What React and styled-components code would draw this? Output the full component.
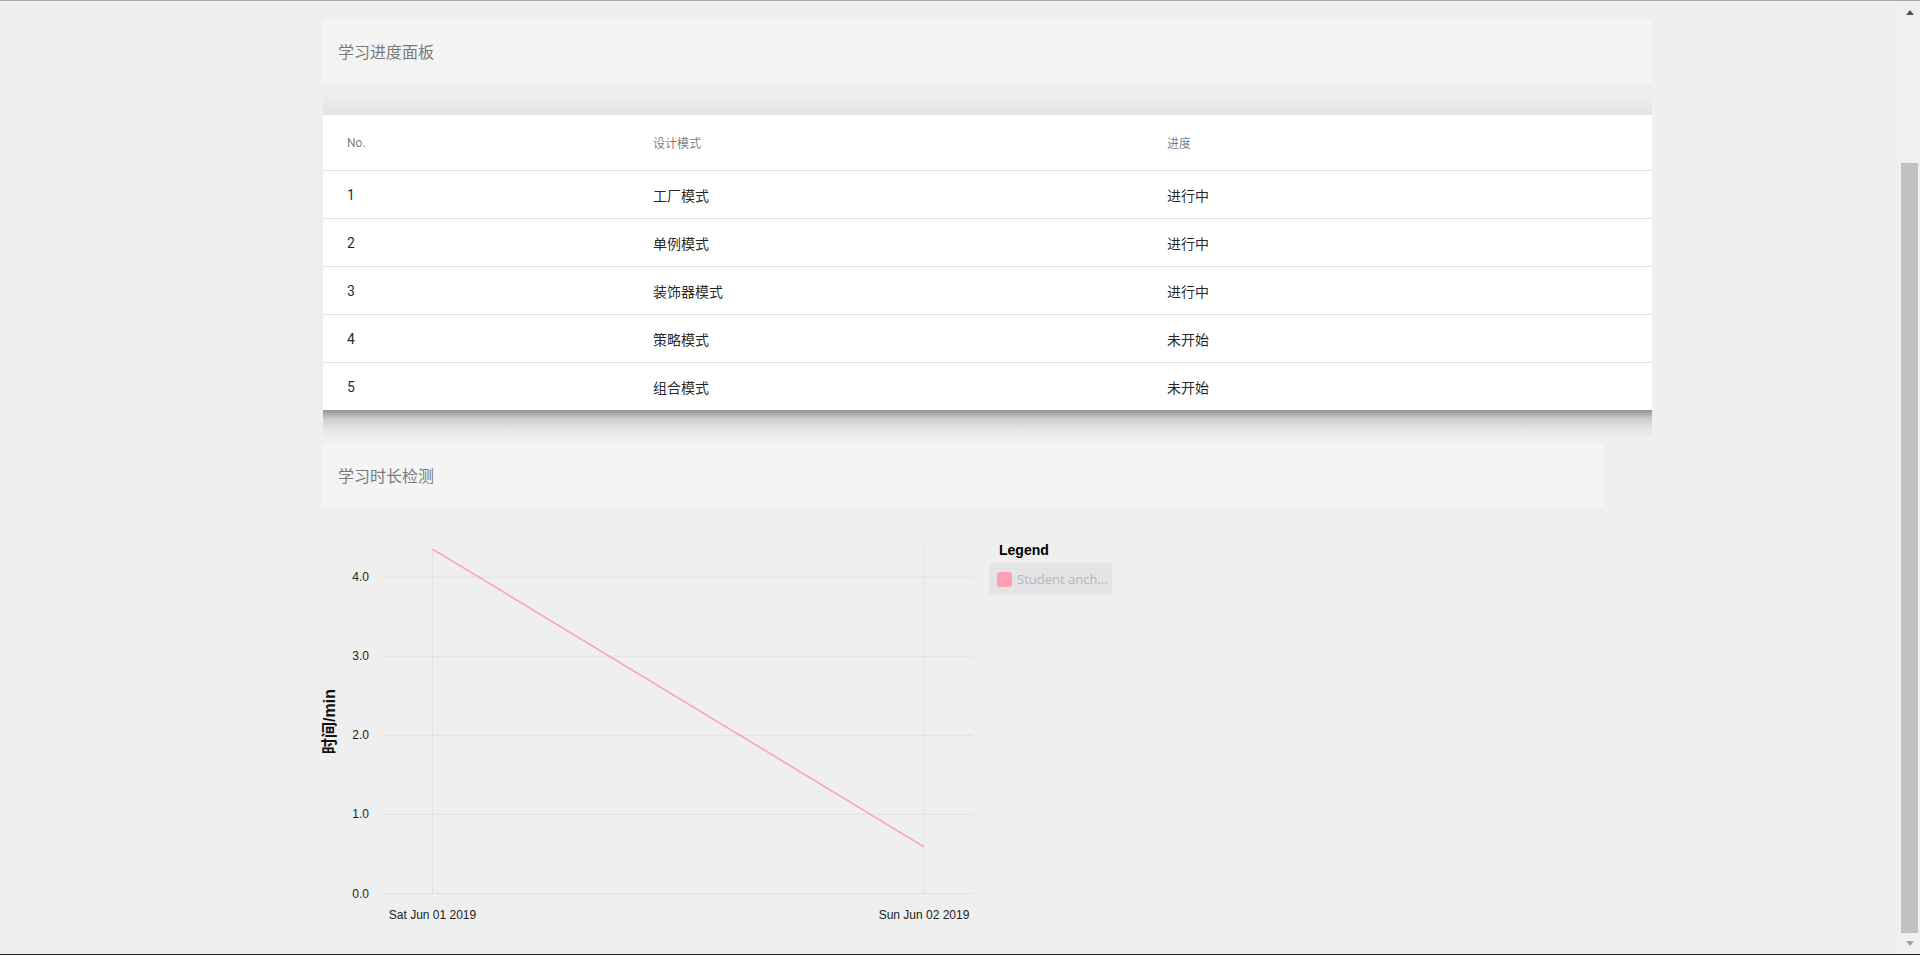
import React from "react";
import styled, { createGlobalStyle } from "styled-components";

const GlobalStyle = createGlobalStyle`
  html, body { margin: 0; padding: 0; height: 100%; overflow: hidden; }
  body {
    font-family: Roboto, "Noto Sans CJK SC", "Liberation Sans", sans-serif;
    background: #efefef;
  }
  * { box-sizing: border-box; }
`;

const Page = styled.div`
  display: flex;
  height: 955px;
  background: #efefef;
  border-top: 1px solid #a9a9a9;
  border-bottom: 1px solid #1e1e1e;
  overflow: hidden;
`;

const Main = styled.main`
  flex: 1;
  padding: 18px 0 0 323px;
`;

const Column = styled.div`
  width: 1329px;
  display: flex;
  flex-direction: column;
`;

const Panel = styled.div`
  height: 64px;
  width: ${(p) => p.$width || "100%"};
  margin-top: ${(p) => p.$top || 0}px;
  background: #f4f4f4;
  display: flex;
  align-items: center;
  padding-left: 15px;
  font-family: "Noto Sans CJK SC", sans-serif;
  font-size: 16px;
  color: #7a7a7a;
`;

const Table = styled.div`
  position: relative;
  margin-top: 32px;
  background: #fff;
  &::before {
    content: "";
    position: absolute;
    left: 0;
    right: 0;
    bottom: 100%;
    height: 22px;
    background: linear-gradient(rgba(0, 0, 0, 0), rgba(0, 0, 0, 0.055));
    pointer-events: none;
  }
  &::after {
    content: "";
    position: absolute;
    left: 0;
    right: 0;
    top: 100%;
    height: 30px;
    background: linear-gradient(
      rgba(0, 0, 0, 0.38),
      rgba(0, 0, 0, 0.14) 30%,
      rgba(0, 0, 0, 0.04) 65%,
      rgba(0, 0, 0, 0)
    );
    pointer-events: none;
  }
`;

const Row = styled.div`
  display: grid;
  grid-template-columns: 306px 514px 1fr;
  align-items: center;
  padding-left: 24px;
  height: ${(p) => (p.$head ? 56 : 48)}px;
  border-bottom: 1px solid #e0e0e0;
  font-size: ${(p) => (p.$head ? 12 : 14)}px;
  color: ${(p) => (p.$head ? "rgba(0,0,0,0.54)" : "rgba(0,0,0,0.87)")};
  &:last-child { border-bottom: none; height: 47px; }
`;

const Cell = styled.div`
  white-space: nowrap;
`;

const ChartRow = styled.div`
  display: flex;
  align-items: flex-start;
  margin-top: 23px;
`;

const ChartSvg = styled.svg`
  display: block;
  overflow: visible;
  flex: none;
`;

const Legend = styled.div`
  margin-left: 6px;
  margin-top: 10px;
  display: flex;
  flex-direction: column;
`;

const LegendTitle = styled.div`
  padding-left: 10px;
  height: 20px;
  line-height: 20px;
  font-family: "Liberation Sans", sans-serif;
  font-weight: bold;
  font-size: 14px;
  color: #000;
`;

const LegendItem = styled.div`
  margin-top: 3px;
  width: 123px;
  height: 32px;
  padding: 0 8px;
  display: flex;
  align-items: center;
  gap: 5px;
  background: #e4e4e4;
  border-radius: 3px;
  font-family: "Open Sans", "Liberation Sans", sans-serif;
  font-size: 13px;
  color: #b3b5c4;
  white-space: nowrap;
`;

const Swatch = styled.span`
  width: 15px;
  height: 15px;
  border-radius: 3px;
  background: #ff9fb3;
  flex: none;
`;

const Scrollbar = styled.div`
  width: 20px;
  display: flex;
  flex-direction: column;
  padding-left: 1px;
  background: #f0f0f0;
`;

const ArrowBox = styled.div`
  width: 17px;
  height: 20px;
  display: flex;
  justify-content: center;
  align-items: ${(p) => (p.$down ? "flex-start" : "center")};
  padding-top: ${(p) => (p.$down ? 7 : 3)}px;
`;

const Triangle = styled.div`
  width: 0;
  height: 0;
  border-left: 4.5px solid transparent;
  border-right: 4.5px solid transparent;
  ${(p) =>
    p.$down
      ? "border-top: 5px solid #a3a3a3;"
      : "border-bottom: 5px solid #505050;"}
`;

const Track = styled.div`
  flex: 1;
`;

const Thumb = styled.div`
  width: 17px;
  height: 770px;
  margin-top: 142px;
  background: #c1c1c1;
`;

const rows = [
  ["1", "工厂模式", "进行中"],
  ["2", "单例模式", "进行中"],
  ["3", "装饰器模式", "进行中"],
  ["4", "策略模式", "未开始"],
  ["5", "组合模式", "未开始"],
];

const Y0 = 363.5;
const STEP = 79.1;
const X1 = 109.5;
const X2 = 601;
const yOf = (v) => Y0 - v * STEP;

function Chart() {
  const ticks = [0, 1, 2, 3, 4];
  const labelStyle = { fontFamily: "'Liberation Sans', sans-serif", fontSize: 12 };
  return (
    <ChartSvg width="660" height="400" viewBox="0 0 660 400">
      {ticks.map((t) => (
        <g key={t}>
          <line x1="61" x2="650" y1={yOf(t)} y2={yOf(t)} stroke="#e1e1e1" strokeWidth="1" />
          <text x="46" y={yOf(t)} textAnchor="end" dominantBaseline="central" fill="#222" style={labelStyle}>
            {t.toFixed(1)}
          </text>
        </g>
      ))}
      <line x1={X1} x2={X1} y1="19" y2={Y0} stroke="#e1e1e1" strokeWidth="1" />
      <line x1={X2} x2={X2} y1="19" y2={Y0} stroke="#e1e1e1" strokeWidth="1" />
      <line x1={X1} y1={yOf(4.355)} x2={X2} y2={yOf(0.59)} stroke="#ff9fb3" strokeWidth="1.5" />
      <text x={X1} y="385" textAnchor="middle" dominantBaseline="central" fill="#222" style={labelStyle}>
        Sat Jun 01 2019
      </text>
      <text x={X2} y="385" textAnchor="middle" dominantBaseline="central" fill="#222" style={labelStyle}>
        Sun Jun 02 2019
      </text>
      <text
        x="0"
        y="0"
        transform="translate(6 191.5) rotate(-90)"
        textAnchor="middle"
        dominantBaseline="central"
        fill="#111"
        style={{ fontFamily: "'Liberation Sans', 'Noto Sans CJK SC', sans-serif", fontSize: 16, fontWeight: "bold" }}
      >
        时间/min
      </text>
    </ChartSvg>
  );
}

export default function App() {
  return (
    <>
      <GlobalStyle />
      <Page>
        <Main>
          <Column>
            <Panel>学习进度面板</Panel>
            <Table>
              <Row $head>
                <Cell>No.</Cell>
                <Cell>设计模式</Cell>
                <Cell>进度</Cell>
              </Row>
              {rows.map((r) => (
                <Row key={r[0]}>
                  <Cell>{r[0]}</Cell>
                  <Cell>{r[1]}</Cell>
                  <Cell>{r[2]}</Cell>
                </Row>
              ))}
            </Table>
            <Panel $top={33} $width="1281px">学习时长检测</Panel>
            <ChartRow>
              <Chart />
              <Legend>
                <LegendTitle>Legend</LegendTitle>
                <LegendItem>
                  <Swatch />
                  <span>Student anch...</span>
                </LegendItem>
              </Legend>
            </ChartRow>
          </Column>
        </Main>
        <Scrollbar>
          <ArrowBox>
            <Triangle />
          </ArrowBox>
          <Track>
            <Thumb />
          </Track>
          <ArrowBox $down>
            <Triangle $down />
          </ArrowBox>
        </Scrollbar>
      </Page>
    </>
  );
}
